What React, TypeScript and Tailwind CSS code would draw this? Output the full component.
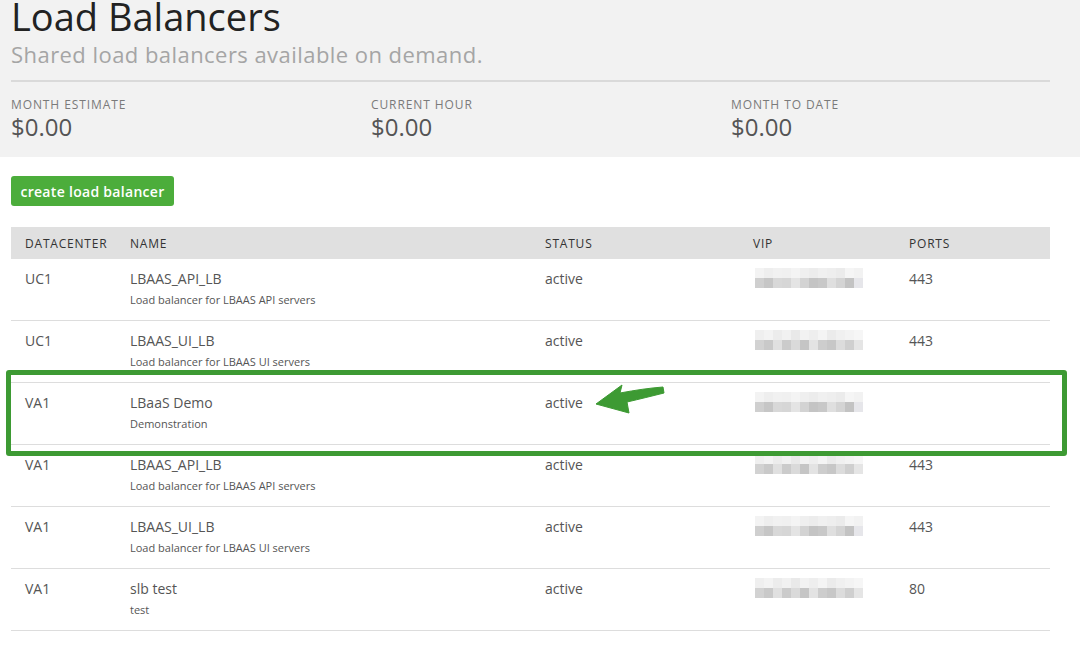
import React from 'react';

type Lb = {
  dc: string;
  name: string;
  desc: string;
  status: string;
  ports: string;
  vip: string[][];
};

// pixelated (blurred) VIP addresses, two rows of grey blocks
const VIP_A = [
  ['bg-[#f3f3f3]', 'bg-[#eeeeee]', 'bg-[#f1f1f1]', 'bg-[#f0f0f0]', 'bg-[#f4f4f4]', 'bg-[#efefef]', 'bg-[#ececec]', 'bg-[#f0f0f0]', 'bg-[#eeeeee]', 'bg-[#ebebeb]', 'bg-[#f5f5f5]', 'bg-[#f2f2f2]'],
  ['bg-[#cfcfcf]', 'bg-[#c6c6c6]', 'bg-[#d8d8d8]', 'bg-[#d6d6d6]', 'bg-[#e4e4e4]', 'bg-[#d3d3d3]', 'bg-[#c4c4c4]', 'bg-[#c8c8c8]', 'bg-[#dfdfdf]', 'bg-[#d4d4d4]', 'bg-[#c3c3c3]', 'bg-[#e6e6ea]'],
];
const VIP_B = [
  ['bg-[#efefef]', 'bg-[#f3f3f3]', 'bg-[#ececec]', 'bg-[#f1f1f1]', 'bg-[#e9e9e9]', 'bg-[#f2f2f2]', 'bg-[#eeeeee]', 'bg-[#f4f4f4]', 'bg-[#ebebeb]', 'bg-[#f0f0f0]', 'bg-[#f3f3f3]', 'bg-[#f6f6f6]'],
  ['bg-[#d2d2d2]', 'bg-[#c9c9c9]', 'bg-[#e0e0e0]', 'bg-[#cbcbcb]', 'bg-[#dadada]', 'bg-[#c5c5c5]', 'bg-[#e3e3e3]', 'bg-[#cdcdcd]', 'bg-[#c7c7c7]', 'bg-[#dcdcdc]', 'bg-[#cfcfcf]', 'bg-[#e5e5e5]'],
];

const ROWS: Lb[] = [
  { dc: 'UC1', name: 'LBAAS_API_LB', desc: 'Load balancer for LBAAS API servers', status: 'active', ports: '443', vip: VIP_A },
  { dc: 'UC1', name: 'LBAAS_UI_LB', desc: 'Load balancer for LBAAS UI servers', status: 'active', ports: '443', vip: VIP_B },
  { dc: 'VA1', name: 'LBaaS Demo', desc: 'Demonstration', status: 'active', ports: '', vip: VIP_A },
  { dc: 'VA1', name: 'LBAAS_API_LB', desc: 'Load balancer for LBAAS API servers', status: 'active', ports: '443', vip: VIP_B },
  { dc: 'VA1', name: 'LBAAS_UI_LB', desc: 'Load balancer for LBAAS UI servers', status: 'active', ports: '443', vip: VIP_A },
  { dc: 'VA1', name: 'slb test', desc: 'test', status: 'active', ports: '80', vip: VIP_B },
];

function Stat({ label, value, last }: { label: string; value: string; last?: boolean }) {
  return (
    <div className={last ? 'min-w-0' : 'w-[360px] shrink-0'}>
      <div className="text-[12px] leading-[14px] tracking-[0.9px] text-[#7a7a7a]">{label}</div>
      <div className="text-[24px] leading-[29px] text-[#555555]">{value}</div>
    </div>
  );
}

function Vip({ blocks }: { blocks: string[][] }) {
  return (
    <div className="flex flex-col w-[108px] mt-[-1px]">
      {blocks.map((row, i) => (
        <div key={i} className="flex h-[10px]">
          {row.map((c, j) => (
            <div key={j} className={`${c} w-[9px] h-full`} />
          ))}
        </div>
      ))}
    </div>
  );
}

export default function App() {
  return (
    <div className="relative min-h-[648px] bg-white font-['Open_Sans',sans-serif] text-[#555555] overflow-hidden">
      {/* Header */}
      <header className="bg-[#f2f2f2] pl-[11px] pr-[30px] pb-[16px]">
        <h1 className="text-[38px] leading-[32px] text-[#222222] font-normal">Load Balancers</h1>
        <p className="mt-[10px] text-[22px] leading-[24px] text-[#a5a5a5] tracking-[0.45px]">
          Shared load balancers available on demand.
        </p>
        <div className="mt-[14px] h-[2px] bg-[#dadada]" />
        <div className="mt-[16px] flex">
          <Stat label="MONTH ESTIMATE" value="$0.00" />
          <Stat label="CURRENT HOUR" value="$0.00" />
          <Stat label="MONTH TO DATE" value="$0.00" last />
        </div>
      </header>

      <main className="pl-[11px] pr-[30px] pt-[19px]">
        <button className="h-[30px] w-[163px] rounded-[3px] bg-[#4cad3b] text-white text-[14px] tracking-[0.3px] font-semibold">
          create load balancer
        </button>

        <table className="mt-[21px] w-[1039px] table-fixed border-collapse text-left">
          <colgroup>
            <col className="w-[105px]" />
            <col className="w-[415px]" />
            <col className="w-[208px]" />
            <col className="w-[156px]" />
            <col />
          </colgroup>
          <thead>
            <tr className="bg-[#e0e0e0] h-[32px] text-[12px] tracking-[0.8px] text-[#333333]">
              <th className="pl-[14px] pt-[1px] font-normal">DATACENTER</th>
              <th className="pl-[14px] pt-[1px] font-normal">NAME</th>
              <th className="pl-[14px] pt-[1px] font-normal">STATUS</th>
              <th className="pl-[14px] pt-[1px] font-normal">VIP</th>
              <th className="pl-[14px] pt-[1px] font-normal">PORTS</th>
            </tr>
          </thead>
          <tbody>
            {ROWS.map((r, i) => (
              <tr key={i} className="border-b border-[#dddddd] align-top">
                <td className="pl-[14px] pt-[10px] text-[14px] leading-[20px]">{r.dc}</td>
                <td className="pl-[14px] pt-[10px] pb-[12px]">
                  <div className="text-[14px] leading-[20px]">{r.name}</div>
                  <div className="mt-[3px] text-[11px] leading-[16px]">{r.desc}</div>
                </td>
                <td className="pl-[14px] pt-[10px] text-[14px] leading-[20px]">{r.status}</td>
                <td className="pl-[16px] pt-[10px]">
                  <Vip blocks={r.vip} />
                </td>
                <td className="pl-[14px] pt-[10px] text-[14px] leading-[20px]">{r.ports}</td>
              </tr>
            ))}
          </tbody>
        </table>
      </main>

      {/* annotation: highlight box and arrow */}
      <div className="absolute left-[6px] top-[370px] w-[1061px] h-[86px] border-[5px] border-[#3d9a33] rounded-[3px] pointer-events-none" />
      <svg className="absolute left-0 top-0 pointer-events-none" width="1080" height="648">
        <path
          d="M596,404 L622,385 L620,393 C636,390 650,388 663,387 L664,393 C652,396 640,399 627,402 L629,413 Z"
          fill="#3d9a33"
          stroke="#3d9a33"
          strokeWidth="1"
          strokeLinejoin="round"
        />
      </svg>
    </div>
  );
}
